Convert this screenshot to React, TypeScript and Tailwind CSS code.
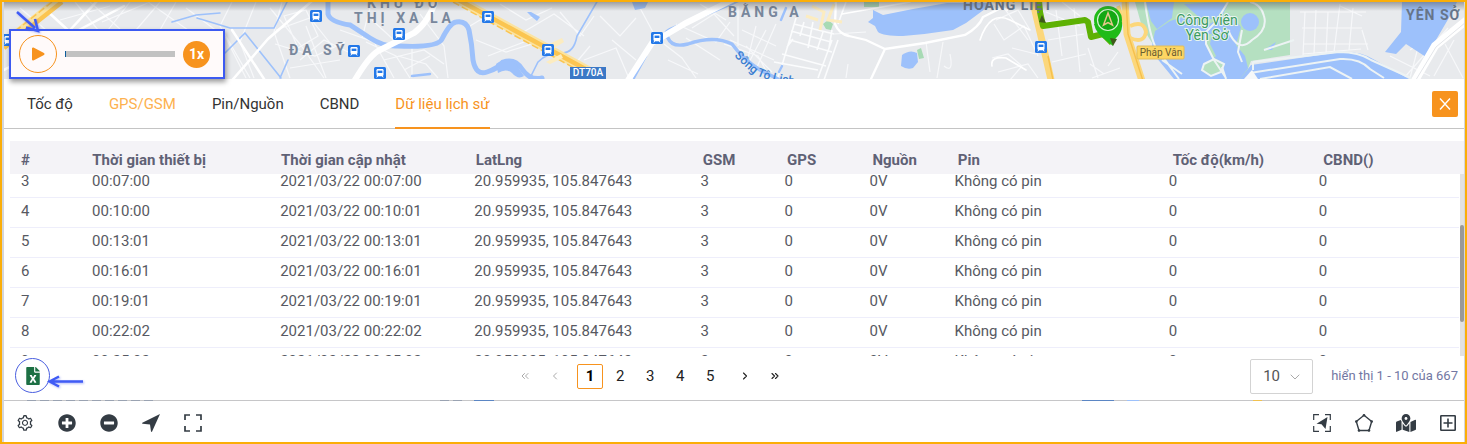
import { useLayoutEffect, useRef } from "react";
import { FaFileExcel, FaMapMarkedAlt, FaMinusCircle, FaPlusCircle } from "react-icons/fa";
import { AiOutlineSetting } from "react-icons/ai";
import { ChevronDown, ChevronLeft, ChevronRight, ChevronsLeft, ChevronsRight } from "lucide-react";

const times = [
  ["00:01:00", "00:01:00"],
  ["00:04:00", "00:04:00"],
  ["00:07:00", "00:07:00"],
  ["00:10:00", "00:10:01"],
  ["00:13:01", "00:13:01"],
  ["00:16:01", "00:16:01"],
  ["00:19:01", "00:19:01"],
  ["00:22:02", "00:22:02"],
  ["00:25:02", "00:25:02"],
  ["00:28:02", "00:28:02"],
];

const headings = [
  "#",
  "Thời gian thiết bị",
  "Thời gian cập nhật",
  "LatLng",
  "GSM",
  "GPS",
  "Nguồn",
  "Pin",
  "Tốc độ(km/h)",
  "CBND()",
];

const stations = [
  [8, 40],
  [316, 16],
  [354, 51],
  [380, 73],
  [399, 34],
  [488, 17],
  [548, 50],
  [657, 38],
  [1041, 47],
];

function Columns() {
  return (
    <colgroup>
      <col className="w-[71px]" />
      <col className="w-[188px]" />
      <col className="w-[194px]" />
      <col className="w-[226px]" />
      <col className="w-[84px]" />
      <col className="w-[85px]" />
      <col className="w-[85px]" />
      <col className="w-[214px]" />
      <col className="w-[150px]" />
      <col className="w-[151px]" />
    </colgroup>
  );
}

function Station({ x, y }: { x: number; y: number }) {
  return (
    <g transform={`translate(${x - 6} ${y - 6})`}>
      <rect width="12" height="12" rx="1.5" fill="#2378e8" />
      <rect x="2.5" y="2" width="7" height="7" rx="1.2" fill="#fff" />
      <rect x="3.6" y="3.6" width="4.8" height="2.4" fill="#2378e8" />
      <path d="M2.8 10.4l1-1.6h4.4l1 1.6" fill="none" stroke="#fff" />
    </g>
  );
}

function MapView() {
  return (
    <svg
      className="block h-full w-full"
      viewBox="4 2 1460 77"
      preserveAspectRatio="xMidYMid slice"
      role="img"
      aria-label="Bản đồ hành trình"
      fontFamily="Roboto, sans-serif"
    >
      <defs>
        <linearGradient id="top-shade" x1="0" x2="0" y1="0" y2="1">
          <stop offset="0" stopColor="#555" stopOpacity="0.5" />
          <stop offset="1" stopColor="#555" stopOpacity="0" />
        </linearGradient>
        <path id="river-name" d="M734 56L751 72Q760 80 800 86" />
      </defs>
      <rect x="0" y="0" width="1467" height="80" fill="#e8eaed" />

      {/* minor streets */}
      <g fill="none" stroke="#f7f8fa" strokeWidth="1.2">
        <path d="M75 2l24 29M90 2l30 27M102 22l48 -20M130 2l-22 28M148 2l40 28M160 2l-24 28M176 2l-16 28M186 8l40 30 20 40M60 20l50 -14M20 8l26 22" />
        <path d="M232 2l-12 24 30 52M256 2l-16 40 14 36M270 8l30 36 24 34M276 30l34 -12 24 30M282 2l-8 30 16 46M275 44l40 12 30 -14M284 16l22 -6 12 26-20 12zM300 60l24 -20 24 12M306 26l20 52M290 68l50 -8" />
        <path d="M340 30l34 12 20 36M366 42l30 14 14 22M372 20l24 22M412 46v32M420 14l24 32 4 32M398 56l28 8 12 14M384 60l40 -10 20 14M370 8l-8 30M404 70l26 -14" />
        <path d="M470 26l20 -12 30 20M500 4l26 16 26 -12M520 34l34 -20 30 22M476 40l30 12 26 -8M488 56l36 -14M560 12l20 24 14 -20M600 16l20 20 16 -18M612 40l24 20M584 60l32 -12 12 28M640 8l14 26M570 70l20 -24" />
        <path d="M664 44l18 14 14 20M686 38l34 22M692 28l22 -14 20 22M668 60l30 14M676 24l40 18 14 -20M700 4l26 16M738 6v40M742 30l34 16M746 46l26 26M756 26l-10 40M730 40l44 20M724 44l34 12 12 22M766 30l-20 38M776 24l-22 50" />
        <path d="M866 32l-32 2M926 42l4 30M943 42l-6 36M944 66q10 8 6 -12M846 78l2 -14" />
        <path d="M994 24l10 16 20 -14 14 30M996 20l22 -10 12 20M1004 8l24 32M992 58l16 -4 14 12-12 14M998 72l30 -8 10 14M1012 48l24 6M1044 22l40 -4M1056 10l6 46M1074 8l6 64M1048 40l36 -6M1052 62l34 -8M1062 2l18 14M1046 12l34 14M1088 48l10 30M1090 64l14 10M1092 78l28 -10M1118 52l-10 14" />
        <path d="M1300 12h66M1302 28h60M1304 44h64M1303 54l58 -5M1305 12l-2 44M1316 10l-2 44M1328 12l-2 42M1340 4l-6 48M1353 8l-4 42M1362 30l6 20M1340 6l22 10M1410 50l30 -20M1404 78l44 -50M1420 40l-10 38M1434 76l20 -36M1390 56l40 20M1445 44l18 34" />
      </g>
      <path
        d="M796 18l-13 44-6 18M790 40l42 12M787 47l6 -8M782 54l44 12M774 62l44 8M794 24l40 10M791 31l40 11M804 22l-4 14M813 22l-5 26M823 32l-6 18M832 30l-3 18M838 40l-14 40M832 40l-14 38M846 2l-8 22"
        fill="none"
        stroke="#fbfcfd"
        strokeWidth="1.6"
      />

      {/* water */}
      <g fill="none" stroke="#9dc1fb" strokeLinecap="round">
        <path d="M328 2v12q2 8 22 11l20 13q14 9 28 8 40 2 44 -7 8 -16 14 -17 10 -2 13 8 3 14 4 30 3 16 14 12 12 -4 16 -10 12 -4 19 7 8 12 20 9" strokeWidth="5" />
        <path d="M172 22l24 -7 24 -2M197 18l33 10h44l14 -28M245 33l-20 20M530 78l8 -16q10 -10 24 -9 12 0 15 -17l21 -36M245 33l36 45M280 78l8 -18" strokeWidth="1.6" />
        <path d="M668 38q-6 -5 3 -9l62 -26 6 -3M668 38q4 10 20 6 26 -9 44 0 10 14 28 26l18 9" strokeWidth="3.4" />
        <path d="M634 78l12 -22M412 76l18 -2M786 8l-5 12M782 66l-3 6" strokeWidth="2.4" />
      </g>
      <g fill="#9dc1fb">
        <path d="M496 64q10 -8 20 0l8 12q-6 4 -12 -3-6 -5 -14 0zM527 12l4 0 9 5-3 4-5 -4zM632 2h16l-3 6-10 2z" />
        <path d="M873 10l10 5 30 -6 34 -6 46 0-27 20-13 7q-25 4 -50 6-20 0 -25 -4l-3 -6-7 -4 5 -4z" />
        <path d="M902 55q8 -6 15 -2l1 9-5 6q-6 2 -12 -2z" />
      </g>
      <path d="M823 24l5 -4 5 4-2 6-5 -1zM917 50l4 -2 3 10-5 1zM864 2h15v5h-15z" fill="#a7dab4" />

      {/* main white roads */}
      <g fill="none" stroke="#fff" strokeLinecap="round">
        <path d="M352 85q16 -28 26 -34l36 -18q14 -10 22 -33M625 85l27 -42 34 -20 50 -25" strokeWidth="6" />
        <path d="M46 10l24 22M70 30l28 -30M228 85l40 -46 44 -38M232 30l36 55M4 70l120 -64" strokeWidth="2.5" />
        <path d="M836 0l-1 24q4 10 14 12l17 4 19 9 40 -6 40 -8q14 -8 18 -18l20 -10M885 49l-14 30M1007 10l-22 -10" strokeWidth="2.3" />
        <path d="M842 14l68 -12M980 40q10 -30 30 -20l20 10M992 66q-2 -10 14 -8l20 12" strokeWidth="1.6" />
      </g>

      {/* highway DT70A */}
      <path d="M455 -2l134 73M60 -1L2 46" stroke="#fbe3a0" strokeWidth="9" fill="none" />
      <path d="M455 -2l134 73M62 2L4 48" stroke="#fbc551" strokeWidth="4.5" fill="none" />
      <path d="M453 2l134 73M52 2L4 40" stroke="#fbc551" strokeWidth="1.5" strokeDasharray="7 3" fill="none" />
      <path d="M549 44l13 -6 2 4-13 8zM546 62l15 -8 2 4-13 6z" fill="#fcecc0" />
      <path d="M812 6l12 6-4 18M806 16l12 4M834 4l-6 16 14 2" stroke="#fcecc0" strokeWidth="3" fill="none" />

      {/* Yên Sở park and lakes */}
      <path d="M1135 2h155v53l-39 6-7 18h-64l-24 -30-14 -22z" fill="#b5e0c1" />
      <g fill="#9dc1fb">
        <path d="M1146 2h28l-2 16-15 11-6 -8zM1155 31l15 -10 20 -6 18 10 20 -12 13 14-5 18 9 11 3 12-8 11h-66l-23 -28z" />
        <path d="M1184 4l34 -2 10 2-8 16-20 -2z" />
        <circle cx="1250" cy="22" r="9" />
        <path d="M1264 50l12 -8-4 8z" />
        <path d="M1251 65l90 -13q20 -1 32 7l36 20H1240z" />
        <path d="M1402 2h55l-7 14-24 41-20 -13-10 10-11 -2 16 -20z" />
      </g>
      <path d="M1204 64l10 -6 10 5-3 8-10 4-9 -6zM1208 34l-2 12 8 12 2 -2-6 -12 2 -10z" fill="#b5e0c1" />
      <g fill="none" stroke="#edf3f4" strokeWidth="2">
        <path d="M1253 62v8M1253 62l86 -10q20 0 32 8l40 18M1250 73l90 -14q20 -1 30 10l14 9M1260 79l70 -12 22 12M1228 2l-12 20-10 10 0 12 8 16 12 18M1226 79l-4 -12M1228 30q10 24 24 10 16 -10 12 -24-3 -12 -14 -14M1242 30l-4 22 4 10M1264 50l30 -10M1145 2q4 30 10 44l24 33M1162 60l20 14" />
        <path d="M1204 64l10 -5 10 5-3 8-10 4-9 -6z" />
      </g>
      <path d="M1467 20l-32 26-22 38" stroke="#fff" strokeWidth="8" fill="none" />
      <path d="M1466 22l-30 25-22 36" stroke="#e3e5e9" strokeWidth="1" fill="none" />
      <path d="M1244 79l8 -9 6 9z" fill="#f6f8f9" />

      {/* yellow expressways */}
      <path d="M1125 0l2 34 16 50M1032 -2l8 34 12 52" stroke="#fcd77b" strokeWidth="7" fill="none" />
      <path d="M1130 26q14 -6 16 6-2 12 -16 6M1118 6l10 28" stroke="#fcd77b" strokeWidth="4" fill="none" />
      <path d="M1126 0l2 34 16 50M1048 56l5 24" stroke="#f6c04c" strokeWidth="1.4" fill="none" />

      {/* travelled route */}
      <path d="M1039 0l1 12 3 14 42 -6 3 2 3 15 12 -3 9 9" stroke="#5eb104" strokeWidth="6" fill="none" strokeLinejoin="round" />
      <path d="M1042 15l4 8-7 -1z" fill="#3f5a1b" />

      <g className="tracking-[4px]" fill="#78879c" fontSize="14" fontWeight="700">
        <text x="367" y="8">KHU ĐÔ</text>
        <text x="354" y="23">THỊ XA LA</text>
        <text x="289" y="55">ĐA SỸ</text>
        <text x="728" y="17">BẰNG A</text>
      </g>
      <g className="tracking-[1px]" fill="#66758a" fontSize="14" fontWeight="700">
        <text x="963" y="10">HOÀNG LIỆT</text>
        <text x="1406" y="20">YÊN SỞ</text>
      </g>
      <g fill="#3c9a64" stroke="#e8f5ec" strokeWidth="2" paintOrder="stroke" fontSize="14" textAnchor="middle">
        <text x="1207" y="25">Công viên</text>
        <text x="1207" y="40">Yên Sở</text>
      </g>
      <text fill="#3c7ed0" fontSize="12" fontWeight="500">
        <textPath href="#river-name">Sông Tô Lịch</textPath>
      </text>

      <rect x="570" y="67" width="36" height="13" fill="#3b78c6" />
      <text x="588" y="76" fill="#fff" fontSize="10" fontWeight="500" textAnchor="middle">DT70A</text>
      <rect x="1137" y="46" width="47" height="13" rx="1" fill="#fdd663" stroke="#e2bd5c" />
      <text x="1161" y="56" fill="#6b5d30" fontSize="10" textAnchor="middle">Pháp Vân</text>

      {stations.map(([x, y]) => (
        <Station key={`${x}-${y}`} x={x} y={y} />
      ))}

      {/* end marker */}
      <path d="M1094 24q2 10 13 17l6 5q0 -6 5 -10 5 -6 4 -14z" fill="#20bb18" />
      <circle cx="1108" cy="20" r="14" fill="#20bb18" />
      <circle cx="1108" cy="20" r="10.5" fill="#14a813" stroke="#d6f2d0" strokeWidth="1.2" />
      <path d="M1108 13l-4.5 12 4.5 -2.5 4.5 2.5z" fill="none" stroke="#e6c78a" strokeWidth="1.5" />
      <path d="M1110 38l7 1-4 7z" fill="#3f5a1b" />
      <rect x="0" y="2" width="1467" height="9" fill="url(#top-shade)" />
    </svg>
  );
}

function Player() {
  return (
    <div className="absolute top-[27px] left-[5px] flex h-[50px] items-center border-2 border-[#3d5af1] bg-[#fffafa] pr-[13px] pl-2 shadow-[1px_3px_5px_rgba(0,0,0,0.4)]">
      <button
        type="button"
        aria-label="Phát"
        className="flex size-[38px] items-center justify-center rounded-full border border-[#f7931e] text-[#f7931e]"
      >
        <svg width="14" height="14" viewBox="0 0 14 14" aria-hidden="true">
          <path d="M2 1.5v11l10.5-5.5z" fill="currentColor" stroke="currentColor" strokeWidth="2" strokeLinejoin="round" />
        </svg>
      </button>
      <input
        type="range"
        aria-label="Tiến trình"
        defaultValue={0}
        className="mx-2 h-[6px] w-[110px] appearance-none bg-[#c2c2c2] [&::-webkit-slider-thumb]:h-[6px] [&::-webkit-slider-thumb]:w-px [&::-webkit-slider-thumb]:appearance-none [&::-webkit-slider-thumb]:bg-[#0c5c9c]"
      />
      <button type="button" className="size-[27px] rounded-full bg-[#f7931e] text-sm font-bold text-white">
        1x
      </button>
      <svg className="pointer-events-none absolute -top-[24px] left-1 drop-shadow-[1px_1px_1px_rgba(60,80,240,0.4)]" width="28" height="26" viewBox="0 0 28 26" aria-hidden="true">
        <path d="M2 5L20 21M11 20.5l12 3.5-3 -12" fill="none" stroke="#3f5bf5" strokeWidth="2.5" />
      </svg>
    </div>
  );
}

const tab = "h-[49px] cursor-pointer pt-[2px] text-[15px]";

function Tabs() {
  return (
    <div className="flex items-center justify-between border-b border-[#c4c4c4] pr-[6px] pl-[23px]">
      <div role="tablist" className="-mb-px flex gap-9 text-[#333]">
        <button type="button" role="tab" className={tab}>Tốc độ</button>
        <button type="button" role="tab" className={`${tab} text-[#fdb14f]`}>GPS/GSM</button>
        <button type="button" role="tab" className={tab}>Pin/Nguồn</button>
        <button type="button" role="tab" className={tab}>CBND</button>
        <button
          type="button"
          role="tab"
          aria-selected="true"
          className="h-[50px] cursor-pointer border-b-2 border-[#f7931e] pt-[2px] text-[15px] text-[#f7931e]"
        >
          Dữ liệu lịch sử
        </button>
      </div>
      <button type="button" aria-label="Đóng" className="flex size-[26px] items-center justify-center rounded-xs bg-[#f7931e]">
        <svg width="12" height="12" viewBox="0 0 12 12" stroke="#fff" strokeWidth="1.4" aria-hidden="true">
          <path d="M1 0.5l10 11M11 0.5l-10 11" />
        </svg>
      </button>
    </div>
  );
}

function HistoryTable() {
  const scroller = useRef<HTMLDivElement>(null);
  useLayoutEffect(() => {
    if (scroller.current) scroller.current.scrollTop = 67;
  }, []);

  return (
    <div className="pt-3 pl-[6px]">
      <table className="w-full table-fixed bg-[#f4f3f7] text-left text-[15px] text-[#5f6175]">
        <Columns />
        <thead>
          <tr className="h-[33px]">
            {headings.map((h) => (
              <th key={h} scope="col" className="pt-1 pl-[11px] leading-5 font-bold whitespace-nowrap">
                {h}
              </th>
            ))}
          </tr>
        </thead>
      </table>
      <div className="flex">
        <div ref={scroller} className="h-[182px] flex-1 overflow-y-auto [scrollbar-width:none]">
          <table className="w-full table-fixed border-collapse text-[15px] text-[#575962]">
            <Columns />
            <tbody>
              {times.map(([device, updated], i) => (
                <tr key={device} className="h-[30px] border-b border-[#eeeefb] *:pt-0 *:pb-[2px] *:pl-[11px] *:leading-5 *:whitespace-nowrap">
                  <td>{i + 1}</td>
                  <td>{device}</td>
                  <td>2021/03/22 {updated}</td>
                  <td>20.959935, 105.847643</td>
                  <td>3</td>
                  <td>0</td>
                  <td>0V</td>
                  <td>Không có pin</td>
                  <td>0</td>
                  <td>0</td>
                </tr>
              ))}
            </tbody>
          </table>
        </div>
        <div className="ml-px w-1 bg-[#e2e2e2] pt-[51px]" aria-hidden="true">
          <div className="h-[97px] rounded-sm bg-[#999]" />
        </div>
      </div>
    </div>
  );
}

const pageLink = "flex h-6 w-[30px] items-center justify-center";

function TableFooter() {
  return (
    <div className="flex h-11 items-center justify-between pr-[6px] pl-[11px]">
      <div className="relative -mt-[5px]">
        <button
          type="button"
          aria-label="Xuất Excel"
          className="flex size-[35px] items-center justify-center rounded-full border border-[#4a5fe0] text-[#1d7044]"
        >
          <FaFileExcel size={18} />
        </button>
        <svg className="pointer-events-none absolute top-[17px] left-8 drop-shadow-[1px_1px_1px_rgba(60,80,240,0.4)]" width="38" height="14" viewBox="0 0 38 14" aria-hidden="true">
          <path d="M3 6.5h33M12 1.5L2.5 6.5l9.5 5" fill="none" stroke="#3f5bf5" strokeWidth="2.5" />
        </svg>
      </div>
      <nav aria-label="Phân trang" className="-mt-1 flex items-center text-[15px] text-[#222]">
        <button type="button" disabled aria-label="Trang đầu" className={`${pageLink} text-[#aaa]`}>
          <ChevronsLeft size={12} strokeWidth={2} />
        </button>
        <button type="button" disabled aria-label="Trang trước" className={`${pageLink} text-[#aaa]`}>
          <ChevronLeft size={12} strokeWidth={2} />
        </button>
        <div className="mx-[5px] flex">
          <div className={pageLink}>
            <button type="button" aria-current="page" className="h-[25px] w-[26px] shrink-0 rounded-xs border border-[#f7931e] font-bold text-black">
              1
            </button>
          </div>
          <button type="button" className={pageLink}>2</button>
          <button type="button" className={pageLink}>3</button>
          <button type="button" className={pageLink}>4</button>
          <button type="button" className={pageLink}>5</button>
        </div>
        <button type="button" aria-label="Trang sau" className={pageLink}>
          <ChevronRight size={12} strokeWidth={2.2} />
        </button>
        <button type="button" aria-label="Trang cuối" className={pageLink}>
          <ChevronsRight size={12} strokeWidth={2.2} />
        </button>
      </nav>
      <div className="-mt-1 flex items-center gap-[18px]">
        <div className="relative">
          <select
            aria-label="Số dòng mỗi trang"
            defaultValue="10"
            className="h-[35px] w-[63px] appearance-none rounded-xs border border-[#d3d3d3] bg-white pl-3 text-[15px] text-[#555]"
          >
            <option>10</option>
            <option>20</option>
            <option>50</option>
          </select>
          <ChevronDown size={16} strokeWidth={1.5} className="pointer-events-none absolute top-[10px] right-[10px] text-[#aaa]" />
        </div>
        <span className="text-[13px] text-[#7277a3]">hiển thị 1 - 10 của 667</span>
      </div>
    </div>
  );
}

const tool = "flex h-10 w-[42px] items-center justify-center";

function Toolbar() {
  return (
    <div className="flex h-[41px] items-start justify-between pt-[2px] text-[#343c44]">
      <div className="flex">
        <button type="button" aria-label="Cài đặt" className={tool}>
          <AiOutlineSetting size={18} />
        </button>
        <button type="button" aria-label="Phóng to" className={tool}>
          <FaPlusCircle size={18} />
        </button>
        <button type="button" aria-label="Thu nhỏ" className={tool}>
          <FaMinusCircle size={18} />
        </button>
        <button type="button" aria-label="Vị trí của tôi" className={tool}>
          <svg width="18" height="18" viewBox="0 0 18 18" fill="currentColor" aria-hidden="true">
            <path d="M18 0L0.3 8.7q-0.6 0.7 0.3 1.1l7.4 0.7 1 7q0.6 0.8 1.1 0z" />
          </svg>
        </button>
        <button type="button" aria-label="Toàn màn hình" className={tool}>
          <svg width="18" height="18" viewBox="0 0 18 18" fill="none" stroke="currentColor" strokeWidth="1.7" aria-hidden="true">
            <path d="M6 1H1v5M12 1h5v5M6 17H1v-5M12 17h5v-5" />
          </svg>
        </button>
      </div>
      <div className="-mr-[5px] flex">
        <button type="button" aria-label="Theo dõi" className={tool}>
          <svg width="18" height="18" viewBox="0 0 18 18" fill="none" stroke="currentColor" strokeWidth="1.2" aria-hidden="true">
            <path d="M6 0.7H0.7V6M12 0.7h5.3V6M6 17.3H0.7V12M12 17.3h5.3V12" />
            <path d="M14.5 3L3.5 9.7l5 0.6 4 4.7z" fill="currentColor" stroke="none" />
          </svg>
        </button>
        <button type="button" aria-label="Vùng" className={tool}>
          <svg width="18" height="18" viewBox="0 0 18 18" fill="none" stroke="currentColor" strokeWidth="1.4" aria-hidden="true">
            <path d="M9 1.3l7.7 6.2L14 16.5H4L1.3 7.5z" />
            <g fill="currentColor" stroke="none">
              <circle cx="9" cy="1.3" r="1.3" />
              <circle cx="16.7" cy="7.5" r="1.3" />
              <circle cx="14" cy="16.5" r="1.3" />
              <circle cx="4" cy="16.5" r="1.3" />
              <circle cx="1.3" cy="7.5" r="1.3" />
            </g>
          </svg>
        </button>
        <button type="button" aria-label="Địa điểm" className={tool}>
          <FaMapMarkedAlt size={20} />
        </button>
        <button type="button" aria-label="Thêm" className={tool}>
          <svg width="16" height="16" viewBox="0 0 16 16" fill="none" stroke="currentColor" strokeWidth="1.6" aria-hidden="true">
            <rect x="0.8" y="0.8" width="14.4" height="14.4" rx="0.5" />
            <path d="M8 3.5v9M3.5 8h9" />
          </svg>
        </button>
      </div>
    </div>
  );
}

export default function App() {
  return (
    <main className="border-2 border-[#fbae08] bg-white font-['Roboto',sans-serif]">
      <div className="border-r border-l-2 border-[#d4d6da]">
        <section className="relative z-10 h-[77px]">
          <MapView />
          <Player />
        </section>
        <Tabs />
        <HistoryTable />
        <TableFooter />
        <svg className="block h-px w-full" viewBox="0 0 1460 1" preserveAspectRatio="none" aria-hidden="true">
          <rect width="1460" height="1" fill="#c6c6c8" />
          <path d="M23 0.5h126M436 0.5h22" stroke="#9aa3b2" strokeDasharray="9 4" />
          <path d="M470 0.5h20M1078 0.5h32" stroke="#5b86c4" />
          <path d="M1123 0.5h12" stroke="#9dc1fb" />
          <path d="M1249 0.5h9" stroke="#f1c14f" />
        </svg>
        <Toolbar />
      </div>
    </main>
  );
}
